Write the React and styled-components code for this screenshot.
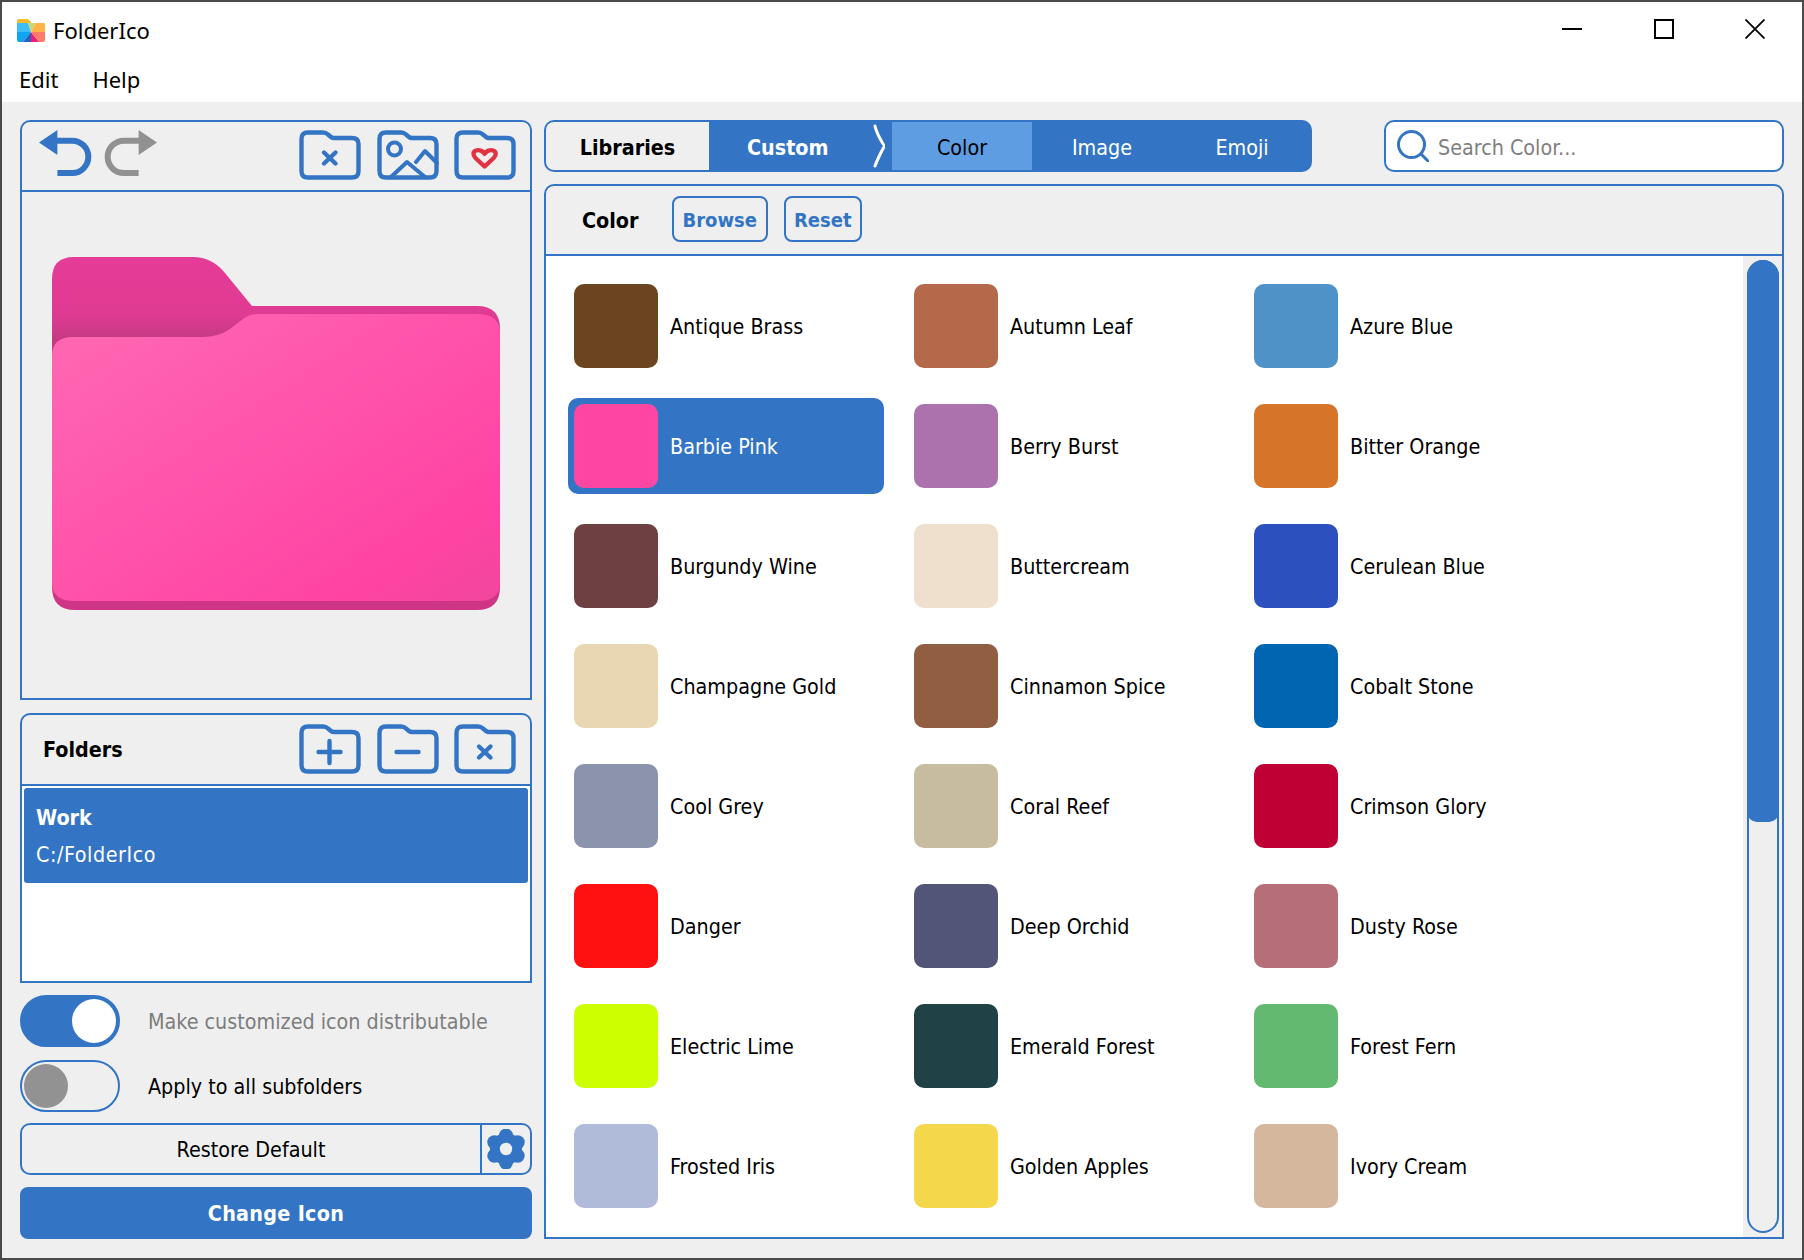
import React from 'react';
import styled, { createGlobalStyle } from 'styled-components';

const BLUE = '#3375c4';
const GRAY = '#efefef';

const GlobalStyle = createGlobalStyle`
  html, body {
    margin: 0;
    padding: 0;
    background: ${GRAY};
  }
  * {
    box-sizing: border-box;
  }
`;

const Window = styled.div`
  width: 1804px;
  height: 1260px;
  border: 2px solid #4a4a4a;
  background: ${GRAY};
  display: flex;
  flex-direction: column;
  overflow: hidden;
  font-family: "DejaVu Sans Condensed", "DejaVu Sans", sans-serif;
  font-stretch: condensed;
  font-size: 21.33px;
  color: #000;
`;

const TitleBar = styled.div`
  height: 58px;
  background: #fff;
  display: flex;
  align-items: flex-start;
  justify-content: space-between;
`;

const AppTitle = styled.div`
  height: 56px;
  padding-left: 15px;
  display: flex;
  align-items: center;
  gap: 8px;
  font-family: "Noto Sans", sans-serif;
  font-stretch: normal;
  font-size: 22px;
`;

const WindowControls = styled.div`
  display: flex;
  padding-right: 1px;
`;

const WindowButton = styled.div`
  width: 91.5px;
  height: 54px;
  display: flex;
  align-items: center;
  justify-content: center;
`;

const MenuBar = styled.div`
  height: 42px;
  background: #fff;
  padding: 0 0 4px 17px;
  display: flex;
  align-items: center;
  gap: 34px;
  font-family: "Noto Sans", sans-serif;
  font-stretch: normal;
  font-size: 22px;
`;

const Workspace = styled.div`
  flex: 1;
  min-height: 0;
  padding: 18px 18px 19px 18px;
  display: flex;
  gap: 12px;
`;

const LeftColumn = styled.div`
  width: 512px;
  display: flex;
  flex-direction: column;
`;

const RightColumn = styled.div`
  flex: 1;
  min-width: 0;
  display: flex;
  flex-direction: column;
  gap: 12px;
`;

const Panel = styled.div`
  border: 2px solid ${BLUE};
  border-radius: 10px 10px 0 0;
  display: flex;
  flex-direction: column;
  height: ${p => p.$height}px;
  margin-bottom: ${p => p.$gap}px;
  flex: ${p => (p.$height ? 'none' : 1)};
  min-height: 0;
`;

const Toolbar = styled.div`
  height: ${p => p.$height}px;
  flex: none;
  border-bottom: 2px solid ${BLUE};
  padding: 0 14px 2px ${p => p.$left}px;
  display: flex;
  align-items: center;
  justify-content: space-between;
`;

const IconGroup = styled.div`
  display: flex;
  align-items: center;
  gap: ${p => p.$gap}px;
`;

const PreviewArea = styled.div`
  flex: 1;
  padding-bottom: 23px;
  display: flex;
  align-items: center;
  justify-content: center;
`;

const PanelTitle = styled.div`
  font-weight: 700;
  padding-top: 2px;
`;

const FolderList = styled.div`
  flex: 1;
  background: #fff;
  padding: 2px;
`;

const FolderItem = styled.div`
  height: 95px;
  background: ${BLUE};
  border-radius: 3px;
  color: #fff;
  padding-left: 12px;
  display: flex;
  flex-direction: column;
  justify-content: center;
  gap: 10px;
  line-height: 27px;
`;

const FolderName = styled.div`
  font-weight: 700;
`;

const FolderPath = styled.div`
  letter-spacing: 0.55px;
`;

const OptionRow = styled.div`
  height: 52px;
  margin-bottom: ${p => p.$gap}px;
  display: flex;
  align-items: center;
  gap: 28px;
  color: ${p => (p.$muted ? '#7d7d7d' : '#000')};
`;

const Toggle = styled.div`
  width: 100px;
  height: 52px;
  flex: none;
  border: 2px solid ${BLUE};
  border-radius: 26px;
  padding: 2px;
  background: ${p => (p.$on ? BLUE : 'transparent')};
  display: flex;
  justify-content: ${p => (p.$on ? 'flex-end' : 'flex-start')};
`;

const Knob = styled.div`
  width: 44px;
  height: 44px;
  border-radius: 50%;
  background: ${p => (p.$on ? '#fff' : '#929292')};
`;

const RestoreRow = styled.div`
  height: 52px;
  margin-bottom: 12px;
  border: 2px solid ${BLUE};
  border-radius: 10px;
  display: flex;
`;

const RestoreLabel = styled.div`
  flex: 1;
  display: flex;
  align-items: center;
  justify-content: center;
`;

const GearCell = styled.div`
  width: 50px;
  border-left: 2px solid ${BLUE};
  display: flex;
  align-items: center;
  justify-content: center;
`;

const ChangeButton = styled.div`
  height: 52px;
  background: ${BLUE};
  border-radius: 8px;
  color: #fff;
  font-weight: 700;
  letter-spacing: 0.3px;
  display: flex;
  align-items: center;
  justify-content: center;
`;

const TopRow = styled.div`
  height: 52px;
  flex: none;
  display: flex;
  justify-content: space-between;
`;

const TabBar = styled.div`
  width: 768px;
  border: 2px solid ${BLUE};
  border-radius: 10px;
  background: ${BLUE};
  display: flex;
  overflow: hidden;
`;

const LibrariesTab = styled.div`
  width: 163px;
  flex: none;
  padding-top: 2px;
  background: ${GRAY};
  font-weight: 700;
  display: flex;
  align-items: center;
  justify-content: center;
`;

const CustomTab = styled.div`
  position: relative;
  width: 183px;
  flex: none;
  padding: 2px 0 0 38px;
  color: #fff;
  font-weight: 700;
  display: flex;
  align-items: center;
`;

const Chevron = styled.svg`
  position: absolute;
  right: 4px;
  top: 2px;
`;

const SubTab = styled.div`
  width: 140px;
  flex: none;
  padding-top: 2px;
  color: ${p => (p.$active ? '#000' : '#fff')};
  background: ${p => (p.$active ? '#5f9de3' : 'transparent')};
  display: flex;
  align-items: center;
  justify-content: center;
`;

const SearchBox = styled.div`
  width: 400px;
  border: 2px solid ${BLUE};
  border-radius: 10px;
  background: #fff;
  padding: 0 0 0 11px;
  display: flex;
  align-items: center;
  gap: 9px;
`;

const Placeholder = styled.div`
  color: #7f7f7f;
  padding-top: 3px;
`;

const LibraryHeader = styled.div`
  height: 70px;
  flex: none;
  border-bottom: 2px solid ${BLUE};
  padding: 0 0 2px 36px;
  display: flex;
  align-items: center;
`;

const HeaderTitle = styled.div`
  font-weight: 700;
  width: 55px;
  padding-top: 2px;
`;

const HeaderButton = styled.div`
  height: 46px;
  margin-left: ${p => p.$left}px;
  padding: 2px 8.5px 0;
  border: 2px solid ${BLUE};
  border-radius: 8px;
  color: ${BLUE};
  font-size: 20px;
  font-weight: 700;
  display: flex;
  align-items: center;
`;

const LibraryBody = styled.div`
  flex: 1;
  min-height: 0;
  display: flex;
`;

const ColorGrid = styled.div`
  flex: 1;
  background: #fff;
  padding: 22px 0 0 22px;
  display: grid;
  grid-template-columns: repeat(3, 316px);
  grid-auto-rows: 96px;
  gap: 24px;
  align-content: start;
`;

const ColorItem = styled.div`
  border-radius: 10px;
  padding: 6px;
  background: ${p => (p.$selected ? BLUE : 'transparent')};
  color: ${p => (p.$selected ? '#fff' : '#000')};
  display: flex;
  align-items: center;
  gap: 12px;
`;

const Swatch = styled.div`
  width: 84px;
  height: 84px;
  flex: none;
  border-radius: 10px;
  background: ${p => p.$color};
`;

const ScrollGutter = styled.div`
  width: 39px;
  flex: none;
  padding: 4px 3px 4px 4px;
  display: flex;
`;

const ScrollTrack = styled.div`
  flex: 1;
  border: 2px solid ${BLUE};
  border-radius: 16px;
`;

const ScrollThumb = styled.div`
  height: 562px;
  margin: -2px -2px 0;
  background: ${BLUE};
  border-radius: 16px 16px 10px 10px;
`;

const colors = [
  ['Antique Brass', '#6b451f'],
  ['Autumn Leaf', '#b4694a'],
  ['Azure Blue', '#4f92c8'],
  ['Barbie Pink', '#ff46a2'],
  ['Berry Burst', '#ac72ad'],
  ['Bitter Orange', '#d6752a'],
  ['Burgundy Wine', '#6e4042'],
  ['Buttercream', '#efe0ce'],
  ['Cerulean Blue', '#2c51be'],
  ['Champagne Gold', '#e9d7b4'],
  ['Cinnamon Spice', '#925e41'],
  ['Cobalt Stone', '#0265b1'],
  ['Cool Grey', '#8c94ad'],
  ['Coral Reef', '#c8bca0'],
  ['Crimson Glory', '#be0034'],
  ['Danger', '#ff1111'],
  ['Deep Orchid', '#525578'],
  ['Dusty Rose', '#b66e78'],
  ['Electric Lime', '#ccff00'],
  ['Emerald Forest', '#204247'],
  ['Forest Fern', '#63b96f'],
  ['Frosted Iris', '#b0bad9'],
  ['Golden Apples', '#f5d74b'],
  ['Ivory Cream', '#d4b79c'],
];

const AppLogo = () => (
  <svg width="28" height="23" viewBox="0 0 28 23">
    <clipPath id="logoClip">
      <path d="M2 0h8q1.500 0 2.500 1.500L14 3h12q2 0 2 2v16q0 2-2 2H2q-2 0-2-2V2q0-2 2-2z" />
    </clipPath>
    <g clipPath="url(#logoClip)">
      <path d="M0 0h14v4H0z" fill="#f6b92b" />
      <path d="M0 4h11l3 9H0z" fill="#3ebdf7" />
      <path d="M11 4h8l-5 9z" fill="#c8d86e" />
      <path d="M19 4h9v9H14z" fill="#ffb347" />
      <path d="M0 13h14L6 23H0z" fill="#0fa5f0" />
      <path d="M14 13L6 23h8z" fill="#2a5fb5" />
      <path d="M14 13v10h8z" fill="#e91e7a" />
      <path d="M14 13h14v10h-6z" fill="#ff7a6b" />
    </g>
  </svg>
);

const ArrowIcon = ({ color, flip }) => (
  <svg width="53" height="50" viewBox="0 0 53 50" style={flip ? { transform: 'scaleX(-1)' } : undefined}>
    <path d="M0 12.500L18.400 0v25z" fill={color} />
    <path d="M17 10.700H33.200A16.150 16.150 0 0 1 33.200 43H18.400" fill="none" stroke={color} strokeWidth="6" />
  </svg>
);

const FolderOutline = ({ children }) => (
  <svg width="62" height="50" viewBox="0 0 62 50" fill="none" stroke={BLUE} strokeWidth="4.400" strokeLinecap="round" strokeLinejoin="round">
    <path d="M9 2.500h15q3 0 5 2l3 2.500q1.200 1 3 1h18q6.500 0 6.500 6v27q0 6.500-6.500 6.500H9q-6.500 0-6.500-6.500V9q0-6.500 6.500-6.500z" />
    {children}
  </svg>
);

const CrossMark = () => <path d="M25 22.500l11.500 11M36.500 22.500l-11.500 11" />;

const GearIcon = () => (
  <svg width="40" height="40" viewBox="-20 -20 40 40">
    <g fill={BLUE}>
      <circle r="16" />
      <circle cy="-13.500" r="7" />
      <circle cy="13.500" r="7" />
      <circle cx="11.700" cy="-6.750" r="7" />
      <circle cx="-11.700" cy="-6.750" r="7" />
      <circle cx="11.700" cy="6.750" r="7" />
      <circle cx="-11.700" cy="6.750" r="7" />
    </g>
    <circle r="6.200" fill={GRAY} />
  </svg>
);

const BigFolder = () => (
  <svg width="448" height="353" viewBox="0 0 448 353">
    <defs>
      <linearGradient id="tabFill" gradientUnits="userSpaceOnUse" x1="0" y1="0" x2="0" y2="353">
        <stop offset="0" stopColor="#e53c97" />
        <stop offset="0.16" stopColor="#e03b93" />
        <stop offset="0.23" stopColor="#c63a83" />
        <stop offset="0.3" stopColor="#cf3585" />
      </linearGradient>
      <linearGradient id="frontFill" gradientUnits="userSpaceOnUse" x1="90" y1="40" x2="345" y2="430">
        <stop offset="0" stopColor="#ff66b2" />
        <stop offset="0.78" stopColor="#ff43a3" />
        <stop offset="1" stopColor="#ee479a" />
      </linearGradient>
    </defs>
    <path d="M22 0H141Q160 0 173 16L200 49H425Q448 49 448 72V330Q448 353 425 353H23Q0 353 0 330V22Q0 0 22 0Z" fill="url(#tabFill)" />
    <path d="M21 80H151Q166 80 178 72L191 62Q198 57 206 57H425Q448 57 448 76V326Q448 344 425 344H23Q0 344 0 326V99Q0 80 21 80Z" fill="url(#frontFill)" />
  </svg>
);

const App = () => (
  <>
    <GlobalStyle />
    <Window>
      <TitleBar>
        <AppTitle>
          <AppLogo />
          FolderIco
        </AppTitle>
        <WindowControls>
          <WindowButton>
            <svg width="20" height="20"><path d="M0 10h20" stroke="#000" strokeWidth="2" /></svg>
          </WindowButton>
          <WindowButton>
            <svg width="20" height="20"><rect x="1" y="1" width="18" height="18" fill="none" stroke="#000" strokeWidth="2" /></svg>
          </WindowButton>
          <WindowButton>
            <svg width="20" height="20"><path d="M0.500 0.500l19 19M19.500 0.500l-19 19" stroke="#000" strokeWidth="1.800" /></svg>
          </WindowButton>
        </WindowControls>
      </TitleBar>
      <MenuBar>
        <span>Edit</span>
        <span>Help</span>
      </MenuBar>
      <Workspace>
        <LeftColumn>
          <Panel $height={580} $gap={13}>
            <Toolbar $height={70} $left={17}>
              <IconGroup $gap={12}>
                <ArrowIcon color={BLUE} />
                <ArrowIcon color="#919191" flip />
              </IconGroup>
              <IconGroup $gap={15.5}>
                <FolderOutline><CrossMark /></FolderOutline>
                <FolderOutline>
                  <circle cx="17.500" cy="19" r="6.500" strokeWidth="4" />
                  <path d="M14 47l16-15 18 15M39 32l9-11 12 12" strokeWidth="4" />
                </FolderOutline>
                <FolderOutline>
                  <path d="M30.600 36.500L21.500 28C18.500 25 19 21.500 22 20.500 25 19.300 28.500 21 30.600 23.800 32.700 21 36.200 19.300 39.200 20.500 42.200 21.500 42.700 25 39.700 28z" stroke="#e2323f" />
                </FolderOutline>
              </IconGroup>
            </Toolbar>
            <PreviewArea>
              <BigFolder />
            </PreviewArea>
          </Panel>
          <Panel $height={270} $gap={12}>
            <Toolbar $height={71} $left={21}>
              <PanelTitle>Folders</PanelTitle>
              <IconGroup $gap={15.5}>
                <FolderOutline><path d="M30.500 17v22M19.500 28h22" /></FolderOutline>
                <FolderOutline><path d="M19.500 28h22" /></FolderOutline>
                <FolderOutline><CrossMark /></FolderOutline>
              </IconGroup>
            </Toolbar>
            <FolderList>
              <FolderItem>
                <FolderName>Work</FolderName>
                <FolderPath>C:/FolderIco</FolderPath>
              </FolderItem>
            </FolderList>
          </Panel>
          <OptionRow $muted $gap={13}>
            <Toggle $on><Knob $on /></Toggle>
            Make customized icon distributable
          </OptionRow>
          <OptionRow $gap={11}>
            <Toggle><Knob /></Toggle>
            Apply to all subfolders
          </OptionRow>
          <RestoreRow>
            <RestoreLabel>Restore Default</RestoreLabel>
            <GearCell><GearIcon /></GearCell>
          </RestoreRow>
          <ChangeButton>Change Icon</ChangeButton>
        </LeftColumn>
        <RightColumn>
          <TopRow>
            <TabBar>
              <LibrariesTab>Libraries</LibrariesTab>
              <CustomTab>
                Custom
                <Chevron width="15" height="44" viewBox="0 0 15 44" fill="none" stroke="#fff" strokeWidth="3" strokeLinecap="round">
                  <path d="M2 2q1 5 5 12.500 4 7.500 5 7.500-1 0-5 8.500-4 8.500-5 11.500" />
                </Chevron>
              </CustomTab>
              <SubTab $active>Color</SubTab>
              <SubTab>Image</SubTab>
              <SubTab>Emoji</SubTab>
            </TabBar>
            <SearchBox>
              <svg width="32" height="32" viewBox="0 0 32 32" fill="none" stroke={BLUE} strokeWidth="3" strokeLinecap="round">
                <circle cx="14.500" cy="14.500" r="13" />
                <path d="M24 24l7 7" />
              </svg>
              <Placeholder>Search Color...</Placeholder>
            </SearchBox>
          </TopRow>
          <Panel>
            <LibraryHeader>
              <HeaderTitle>Color</HeaderTitle>
              <HeaderButton $left={35}>Browse</HeaderButton>
              <HeaderButton $left={16}>Reset</HeaderButton>
            </LibraryHeader>
            <LibraryBody>
              <ColorGrid>
                {colors.map(([name, color]) => (
                  <ColorItem key={name} $selected={name === 'Barbie Pink'}>
                    <Swatch $color={color} />
                    {name}
                  </ColorItem>
                ))}
              </ColorGrid>
              <ScrollGutter>
                <ScrollTrack>
                  <ScrollThumb />
                </ScrollTrack>
              </ScrollGutter>
            </LibraryBody>
          </Panel>
        </RightColumn>
      </Workspace>
    </Window>
  </>
);

export default App;
